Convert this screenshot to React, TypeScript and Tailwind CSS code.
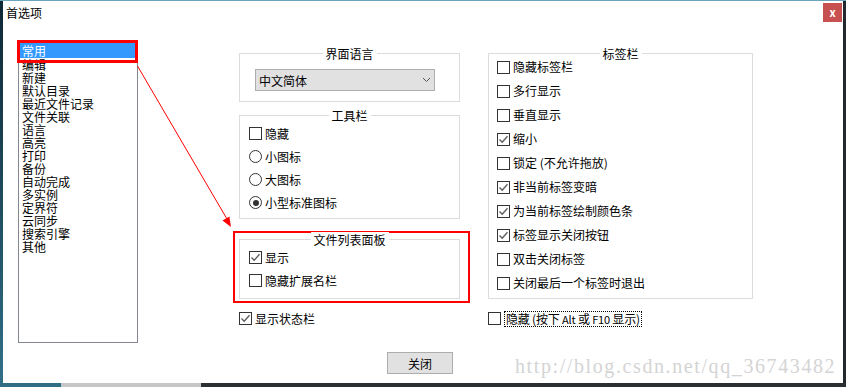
import React from "react"

const listItems = [
  "常用", "编辑", "新建", "默认目录", "最近文件记录", "文件关联", "语言", "高亮",
  "打印", "备份", "自动完成", "多实例", "定界符", "云同步", "搜索引擎", "其他",
]

const tabOptions: [string, boolean][] = [
  ["隐藏标签栏", false],
  ["多行显示", false],
  ["垂直显示", false],
  ["缩小", true],
  ["锁定 (不允许拖放)", false],
  ["非当前标签变暗", true],
  ["为当前标签绘制颜色条", true],
  ["标签显示关闭按钮", true],
  ["双击关闭标签", false],
  ["关闭最后一个标签时退出", false],
]

const Box = ({ checked }: { checked?: boolean }) => (
  <span className="flex h-[13px] w-[13px] shrink-0 items-center justify-center border border-[#333] bg-white">
    {checked && (
      <svg width="11" height="11" viewBox="0 0 11 11">
        <path d="M1.5 5.5 L4.2 8.3 L9.5 2.2" fill="none" stroke="#5a5a5a" strokeWidth="1.3" />
      </svg>
    )}
  </span>
)

const Radio = ({ checked }: { checked?: boolean }) => (
  <span className="flex h-[13px] w-[13px] shrink-0 items-center justify-center rounded-full border border-[#333] bg-white">
    {checked && <span className="h-[6px] w-[6px] rounded-full bg-[#333]" />}
  </span>
)

const Row = ({ children, h = "h-[23px]" }: { children: React.ReactNode; h?: string }) => (
  <div className={`flex items-center gap-[3px] ${h}`}>{children}</div>
)

const Group = ({ title, className, children }: { title: string; className: string; children?: React.ReactNode }) => (
  <div className={`relative border border-[#dcdcdc] ${className}`}>
    <span className="absolute left-1/2 top-[-8px] -translate-x-1/2 whitespace-nowrap bg-white px-[3px] leading-[15px]">
      {title}
    </span>
    {children}
  </div>
)

export default function App() {
  return (
    <div className="relative h-[387px] w-[846px] overflow-hidden bg-[#23292d] font-['Microsoft_YaHei','Noto_Sans_CJK_SC',sans-serif] text-[12px] text-black">
      <div className="h-[1px] bg-[#6aa4bf]" />
      <div className="flex h-[382px]">
        <div className="w-[3px] bg-gradient-to-b from-[#0f2835] to-[#2f7088]" />
        <div className="flex w-[840px] flex-col bg-white">
          {/* title bar */}
          <div className="flex h-[24px] items-start justify-between">
            <span className="pl-[3px] pt-[4px] leading-[15px]">首选项</span>
            <button className="mr-[1px] mt-[2px] flex h-[19px] w-[19px] items-center justify-center bg-[#c75050] text-[11px] font-bold leading-none text-white">
              x
            </button>
          </div>

          {/* body */}
          <div className="flex items-start">
            {/* category list */}
            <div className="ml-[15px] mt-[16px] h-[302px] w-[120px] border border-[#828790] p-[1px]">
              {listItems.map((t, i) =>
                i === 0 ? (
                  <div key={t} className="h-[15px] bg-[#3399ff] pl-[2px] leading-[15px] text-white">{t}</div>
                ) : (
                  <div key={t} className="h-[13px] pl-[2px] leading-[13px]">{t}</div>
                ),
              )}
            </div>

            {/* middle column */}
            <div className="ml-[95px] flex w-[237px] flex-col">
              <Group title="界面语言" className="ml-[6px] mt-[28px] h-[49px] w-[221px]">
                <div className="ml-[15px] mt-[15px] flex h-[22px] w-[180px] items-center justify-between border border-[#adadad] bg-[#e1e1e1] pl-[3px] pr-[3px]">
                  <span className="leading-[15px]">中文简体</span>
                  <svg width="9" height="6" viewBox="0 0 9 6">
                    <path d="M1 1 L4.5 4.5 L8 1" fill="none" stroke="#555" strokeWidth="1" />
                  </svg>
                </div>
              </Group>

              <Group title="工具栏" className="ml-[6px] mt-[13px] h-[104px] w-[221px] pl-[9px] pt-[6px]">
                <Row><Box /><span>隐藏</span></Row>
                <Row><Radio /><span>小图标</span></Row>
                <Row><Radio /><span>大图标</span></Row>
                <Row><Radio checked /><span>小型标准图标</span></Row>
              </Group>

              <div className="mt-[12px] h-[72px] w-[237px] border-2 border-[#ff0000]">
                <Group title="文件列表面板" className="ml-[4px] mt-[6px] h-[60px] w-[221px] pl-[9px] pt-[6px]">
                  <Row><Box checked /><span>显示</span></Row>
                  <Row><Box /><span>隐藏扩展名栏</span></Row>
                </Group>
              </div>

              <div className="ml-[6px] mt-[4px]">
                <Row><Box checked /><span>显示状态栏</span></Row>
              </div>

              <button className="ml-[154px] mt-[22px] flex h-[22px] w-[66px] items-center justify-center border border-[#adadad] bg-[#e1e1e1] leading-[15px]">
                关闭
              </button>
            </div>

            {/* right column */}
            <div className="ml-[18px] flex w-[265px] flex-col">
              <Group title="标签栏" className="mt-[28px] h-[246px] w-[265px] pl-[8px] pt-[1px]">
                {tabOptions.map(([t, c]) => (
                  <Row key={t} h="h-[24px]">
                    <Box checked={c} />
                    <span className="whitespace-nowrap">{t}</span>
                  </Row>
                ))}
              </Group>
              <div className="mt-[8px]">
                <Row>
                  <Box />
                  <span className="whitespace-nowrap border border-dotted border-black px-[1px] leading-[14px] tracking-[-0.2px]">
                    隐藏 (按下 <span className="text-[11px]">Alt</span> 或 <span className="text-[11px]">F10</span> 显示)
                  </span>
                </Row>
              </div>
            </div>
          </div>
        </div>
        <div className="w-[3px] bg-[#23292d]" />
      </div>
      <div className="flex h-[4px]">
        <div className="w-[61px] bg-[#2f6d83]" />
        <div className="w-[140px] bg-[#c4c6c8]" />
        <div className="flex-1 bg-[#2a2f33]" />
      </div>

      {/* annotations over the screenshot */}
      <div className="pointer-events-none absolute left-[17px] top-[40px] h-[23px] w-[121px] border-[3px] border-[#ff0000]" />
      <svg className="pointer-events-none absolute left-0 top-0" width="846" height="387">
        <line x1="137.5" y1="66" x2="227" y2="219" stroke="#ff0000" strokeWidth="1" />
        <polygon points="231,227 222.5,220.4 229.4,216.4" fill="#ff0000" />
      </svg>
      <div className="pointer-events-none absolute left-[515px] top-[356px] whitespace-nowrap font-['Liberation_Serif',serif] text-[20px] leading-[20px] tracking-[1.6px] text-[#d4d4d4]">
        http://blog.csdn.net/qq_36743482
      </div>
    </div>
  )
}
